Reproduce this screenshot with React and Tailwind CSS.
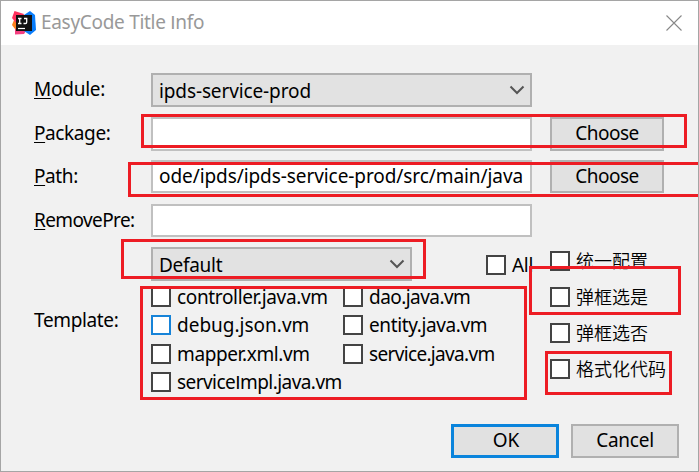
import clsx from "clsx";

function Label({ first, rest, className }) {
  return (
    <div className={clsx("w-[117px] shrink-0 whitespace-nowrap pt-[3px] leading-[26px]", className)}>
      <span className="underline decoration-1 underline-offset-[2px]">{first}</span>
      {rest}
    </div>
  );
}

function SansI() {
  return <span className="font-['Liberation_Sans',sans-serif]">I</span>;
}

function Chevron() {
  return (
    <svg className="h-[10px] w-[16px]" viewBox="0 0 16 10" fill="none" stroke="#555" strokeWidth="2">
      <path d="M1.5 1.5 L8 8 L14.5 1.5" />
    </svg>
  );
}

function Select({ children, className }) {
  return (
    <div className={clsx("flex shrink-0 items-center justify-between border-2 border-[#b0b0b0] bg-[#e2e2e2] pl-1.5 pr-[5px]", className)}>
      <span className="pt-0.5">{children}</span>
      <Chevron />
    </div>
  );
}

function Field({ children, className }) {
  return (
    <div className={clsx("w-[381px] shrink-0 overflow-hidden whitespace-nowrap border-2 border-[#c0c0c0] bg-white pl-1.5", className)}>
      {children}
    </div>
  );
}

function Button({ children, className }) {
  return (
    <button className={clsx("flex items-center justify-center bg-[#e1e1e1]", className)}>{children}</button>
  );
}

function Check({ children, className, active }) {
  return (
    <label className={clsx("flex h-5 items-center whitespace-nowrap", className)}>
      <span className={clsx("h-5 w-5 shrink-0 border-2 bg-white", active ? "border-[#1683d8]" : "border-[#444]")} />
      <span className="ml-1.5 leading-5">{children}</span>
    </label>
  );
}

function Mark({ className }) {
  return <div className={clsx("pointer-events-none absolute border-[3px] border-[#ed1c24]", className)} />;
}

function Logo() {
  return (
    <svg className="h-6 w-6" viewBox="0 0 24 24">
      <path d="M0 14 L2 9 L6 12 L6 19 L3 18Z" fill="#fc801d" />
      <path d="M2.5 0 L12 3 L8 12 L4 12 L0 7Z" fill="#fe315d" />
      <path d="M3 18 L8 17 L14 20 L12 23 L3 23.5Z" fill="#f43f80" />
      <path d="M12 4 L18 0 L23 4 L24 19 L18 24 L12 20Z" fill="#087cfa" />
      <rect x="4" y="4" width="16" height="16" fill="#111" />
      <path d="M6 7.5 H9.5 M7.7 7 V12.5 M6 12.5 H9.5 M12 7.5 H14.7 V11.3 Q14.7 12.5 13.4 12.5 H11.5" fill="none" stroke="#fff" strokeWidth="1.3" />
      <path d="M6 17.5 H13" stroke="#fff" strokeWidth="1.2" />
    </svg>
  );
}

export default function App() {
  return (
    <div className="relative flex h-[472px] w-[699px] flex-col overflow-hidden border border-[#a5a5a5] bg-[#f1f1f1] font-['Noto_Sans','Noto_Sans_CJK_SC',sans-serif] text-[19px] text-black">
      <header className="flex h-11 shrink-0 items-center bg-white pl-[11px] pr-4">
        <Logo />
        <h1 className="ml-[5px] flex-1 text-[19px] tracking-[-0.3px] text-[#999]">
          EasyCode Title <SansI />nfo
        </h1>
        <svg className="h-4 w-4" viewBox="0 0 16 16" stroke="#888" strokeWidth="1.1">
          <path d="M0.5 0.5 L15.5 15.5 M15.5 0.5 L0.5 15.5" />
        </svg>
      </header>

      <main className="flex flex-1 flex-col pl-[33px] pt-7">
        <div className="flex h-[44px]">
          <Label first="M" rest="odule:" className="tracking-[-0.25px]" />
          <Select className="h-[34px] w-[381px] tracking-[-0.12px]">ipds-service-prod</Select>
        </div>
        <div className="flex h-[43px]">
          <Label first="P" rest="ackage:" className="tracking-[-0.4px]" />
          <Field className="h-[34px]" />
          <Button className="ml-[18px] h-[34px] w-[114px] border-2 border-[#b0b0b0] pb-0.5 tracking-[-0.5px]">Choose</Button>
        </div>
        <div className="flex h-[44px]">
          <Label first="P" rest="ath:" className="tracking-[-0.4px]" />
          <Field className="h-[33px] leading-[29px] tracking-[-0.08px]">ode/ipds/ipds-service-prod/src/main/java</Field>
          <Button className="ml-[18px] h-[33px] w-[114px] border-2 border-[#b0b0b0] tracking-[-0.5px]">Choose</Button>
        </div>
        <div className="flex h-[43px]">
          <Label first="R" rest="emovePre:" className="tracking-[-0.6px]" />
          <Field className="h-[33px]" />
        </div>
        <div className="flex h-[177px]">
          <div className="w-[117px] shrink-0 pt-[60px] leading-[26px] tracking-[-0.35px]">Template:</div>
          <div className="w-[381px] shrink-0">
            <div className="flex h-10">
              <Select className="h-[34px] w-[261px] tracking-[-0.3px]">Default</Select>
              <Check className="ml-[74px] mt-2 tracking-[-0.3px]">All</Check>
            </div>
            <div className="grid auto-rows-[20px] grid-cols-[192px_189px] gap-y-[8.4px]">
              <Check className="tracking-[-0.35px]">controller.java.vm</Check>
              <Check className="tracking-[-0.55px]">dao.java.vm</Check>
              <Check className="tracking-[0px]" active>debug.json.vm</Check>
              <Check className="tracking-[-0.38px]">entity.java.vm</Check>
              <Check className="tracking-[-0.38px]">mapper.xml.vm</Check>
              <Check className="tracking-[-0.66px]">service.java.vm</Check>
              <Check className="tracking-[-0.55px]">service<SansI />mpl.java.vm</Check>
            </div>
          </div>
          <div className="ml-[18px] flex flex-col gap-4 pt-1 text-[18px] font-[350]">
            <Check>统一配置</Check>
            <Check>弹框选是</Check>
            <Check>弹框选否</Check>
            <Check>格式化代码</Check>
          </div>
        </div>
        <div className="flex gap-3 pl-[417px]">
          <Button className="h-[34px] w-[108px] border-[3px] border-[#0a84dc] pb-0.5 pl-0.5">OK</Button>
          <Button className="h-[34px] w-[108px] border-2 border-[#b0b0b0] pb-0.5 tracking-[-0.25px]">Cancel</Button>
        </div>
      </main>

      <Mark className="left-[140px] top-[113px] h-[34px] w-[546px]" />
      <Mark className="left-[127px] top-[161px] h-[35px] w-[580px]" />
      <Mark className="left-[120px] top-[238px] h-[40px] w-[305px]" />
      <Mark className="left-[139px] top-[285px] h-[114px] w-[387px]" />
      <Mark className="left-[528px] top-[265px] h-[49px] w-[152px]" />
      <Mark className="left-[544px] top-[350px] h-[44px] w-[127px]" />
    </div>
  );
}
